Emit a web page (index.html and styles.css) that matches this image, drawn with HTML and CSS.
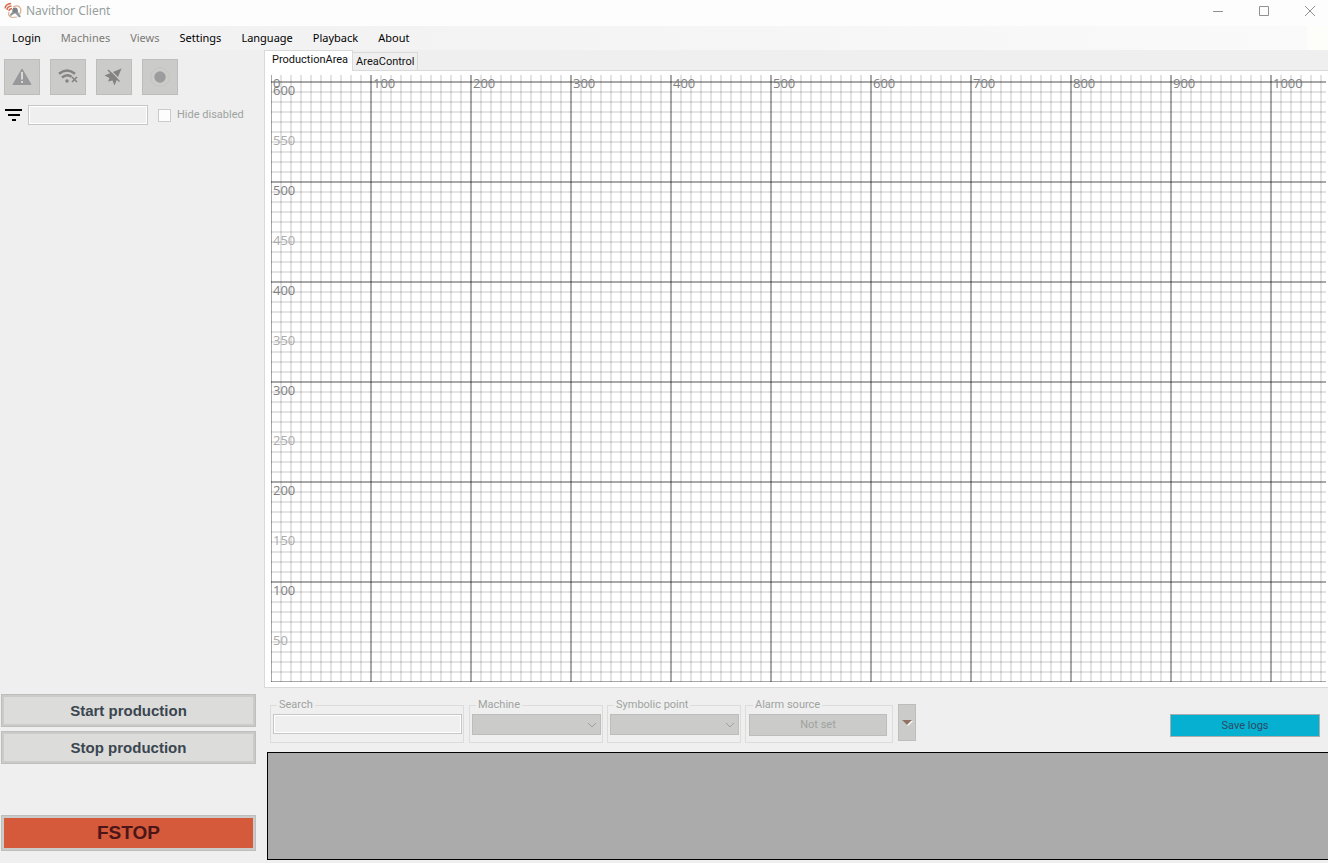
FILE: index.html
```html
<!DOCTYPE html>
<html lang="en">
<head>
<meta charset="utf-8">
<title>Navithor Client</title>
<link rel="stylesheet" href="styles.css">
</head>
<body>
<header class="titlebar">
  <svg class="app-icon" width="18" height="18" viewBox="0 0 18 18" fill="none" aria-hidden="true">
    <path d="M9 5Q14.500 2 16.500 6.500Q17.500 10 15.500 12M5 10Q3.500 14 8 15.500L13 15" stroke="#dcb08e" stroke-width="1.200"/>
    <path d="M9 6L13 6.500L14.500 11L17 14.500L15 15.500L11.500 11.500L9.500 12L7 14L5.500 13L8.500 9.500Z" fill="#92979b"/>
    <circle cx="11" cy="8" r="2.600" fill="#7c8287"/>
    <path d="M5 9Q5 7 8 6.500M3 8Q3 4.500 7.500 4M1 6.500Q1.500 2 7 1.500" stroke="#d8694c" stroke-width="1.400"/>
  </svg>
  <h1 class="app-title">Navithor Client</h1>
  <div class="window-controls">
    <button class="window-button" aria-label="Minimize"><svg width="12" height="12" viewBox="0 0 12 12"><path d="M1 6.500H11"/></svg></button>
    <button class="window-button" aria-label="Maximize"><svg width="12" height="12" viewBox="0 0 12 12"><path d="M1.500 1.500H10.500V10.500H1.500Z"/></svg></button>
    <button class="window-button" aria-label="Close"><svg width="12" height="12" viewBox="0 0 12 12"><path d="M1 1L11 11M11 1L1 11"/></svg></button>
  </div>
</header>
<nav class="menubar" aria-label="Main menu">
  <button class="menu-item">Login</button>
  <button class="menu-item" disabled>Machines</button>
  <button class="menu-item" disabled>Views</button>
  <button class="menu-item">Settings</button>
  <button class="menu-item">Language</button>
  <button class="menu-item">Playback</button>
  <button class="menu-item">About</button>
</nav>
<div class="workspace">
  <aside class="sidebar">
    <div class="tool-row">
      <button class="tool" disabled aria-label="Warnings"><svg width="20" height="20" viewBox="0 0 20 20"><path d="M10 2L19 17.500H1Z" fill="#98989a" stroke="#98989a" stroke-linejoin="round"/><path d="M9 5H11V12.500H9ZM9 14H11V16H9Z" fill="#d8d8d6"/></svg></button>
      <button class="tool" disabled aria-label="Connection"><svg width="20" height="20" viewBox="0 0 20 20" fill="none" stroke="#858282" stroke-width="2.400"><path d="M1 6.800Q9 .2 17 6.800M4 10.500Q9 6.300 13.500 9.800"/><circle cx="9" cy="14" r="1.700" fill="#858282" stroke="none"/><path d="M14 10L19 15M19 10L14 15" stroke-width="1.600"/></svg></button>
      <button class="tool" disabled aria-label="Navigate"><svg width="20" height="20" viewBox="0 0 20 20"><path d="M17.500 1.500L10.500 18.500L8.500 13.500L4 14.500L5.500 11L.5 8.500Z" fill="#858282"/><path d="M5 2L17 14" stroke="#cbcbc9" stroke-width="1.200"/><path d="M4 3L15.500 14.500" stroke="#858282" stroke-width="1.400"/></svg></button>
      <button class="tool" disabled aria-label="Record"><svg width="20" height="20" viewBox="0 0 20 20"><circle cx="10" cy="10" r="9.500" fill="none" stroke="#c4c4c1"/><circle cx="10" cy="10" r="5.700" fill="#9c9c9e"/></svg></button>
    </div>
    <div class="filter-row">
      <svg width="18" height="14" viewBox="0 0 18 14" aria-hidden="true"><path d="M0 2H17M3 7H15M7 12H11" stroke="#000" stroke-width="2"/></svg>
      <input class="text-field filter-field" type="text" aria-label="Filter machines" disabled>
      <input class="check" type="checkbox" id="hide-disabled" disabled>
      <label class="muted" for="hide-disabled">Hide disabled</label>
    </div>
    <div class="production">
      <button class="action">Start production</button>
      <button class="action">Stop production</button>
      <button class="action action-stop">FSTOP</button>
    </div>
  </aside>
  <main class="main">
    <div class="tabs" role="tablist">
      <button class="tab tab-active" role="tab" aria-selected="true">ProductionArea</button>
      <button class="tab" role="tab" aria-selected="false">AreaControl</button>
    </div>
    <section class="map-panel" aria-label="Production area map">
      <svg class="map" width="100%" height="100%">
        <defs>
          <pattern id="minor" y="7" width="10" height="10" patternUnits="userSpaceOnUse">
            <path d="M0 0H10V1H0ZM0 9H10V10H0Z" fill="#000" fill-opacity=".11"/>
            <path d="M0 0H1V10H0ZM9 0H10V10H9Z" fill="#000" fill-opacity=".11"/>
          </pattern>
          <pattern id="major" y="7" width="100" height="100" patternUnits="userSpaceOnUse">
            <path d="M0 0H100V1H0ZM0 99H100V100H0Z" fill="#000" fill-opacity=".26"/>
            <path d="M0 0H1V100H0ZM99 0H100V100H99Z" fill="#000" fill-opacity=".26"/>
          </pattern>
        </defs>
        <rect width="100%" height="100%" fill="url(#minor)"/>
        <rect width="100%" height="100%" fill="url(#major)"/>
        <g class="axis-major">
          <text x="2" y="13">0</text><text x="102" y="13">100</text><text x="202" y="13">200</text><text x="302" y="13">300</text><text x="402" y="13">400</text><text x="502" y="13">500</text><text x="602" y="13">600</text><text x="702" y="13">700</text><text x="802" y="13">800</text><text x="902" y="13">900</text><text x="1002" y="13">1000</text>
          <text x="2" y="20">600</text><text x="2" y="120">500</text><text x="2" y="220">400</text><text x="2" y="320">300</text><text x="2" y="420">200</text><text x="2" y="520">100</text>
        </g>
        <g class="axis-minor">
          <text x="2" y="70">550</text><text x="2" y="170">450</text><text x="2" y="270">350</text><text x="2" y="370">250</text><text x="2" y="470">150</text><text x="2" y="570">50</text>
        </g>
      </svg>
    </section>
    <div class="toolbar">
      <fieldset class="group group-search">
        <legend><label for="search">Search</label></legend>
        <input class="text-field" id="search" type="text" disabled>
      </fieldset>
      <fieldset class="group group-select">
        <legend><label for="machine">Machine</label></legend>
        <div class="select-wrap"><select class="drop" id="machine" disabled></select><svg class="chevron" width="10" height="6" viewBox="0 0 10 6"><path d="M1 1L5 5L9 1"/></svg></div>
      </fieldset>
      <fieldset class="group group-select">
        <legend><label for="point">Symbolic point</label></legend>
        <div class="select-wrap"><select class="drop" id="point" disabled></select><svg class="chevron" width="10" height="6" viewBox="0 0 10 6"><path d="M1 1L5 5L9 1"/></svg></div>
      </fieldset>
      <fieldset class="group group-alarm">
        <legend><label for="alarm">Alarm source</label></legend>
        <button class="alarm-button" id="alarm" disabled>Not set</button>
      </fieldset>
      <button class="more" aria-label="More filters"><svg width="11" height="6" viewBox="0 0 11 6"><path d="M1 1H11L6 6Z" fill="#fff"/><path d="M0 0H10L5 5Z" fill="#927264"/></svg></button>
      <button class="save">Save logs</button>
    </div>
    <section class="log" aria-label="Log"></section>
  </main>
</div>
</body>
</html>
```

FILE: styles.css
```css
* { box-sizing: border-box; }

body {
  margin: 0;
  min-height: 100vh;
  display: flex;
  flex-direction: column;
  background: #efefef;
  font: 12px/16px "Noto Sans", "Open Sans", sans-serif;
  color: #000;
}

button, input, select { font: inherit; border-radius: 0; margin: 0; }

.titlebar {
  display: flex;
  align-items: center;
  height: 26px;
  padding: 0 6px 4px 4px;
  background: #fdfdfd;
}
.app-icon { margin-right: 4px; }
.app-title { margin: 0; font-size: 12px; font-weight: 400; color: #95a09c; }
.window-controls { display: flex; gap: 22px; margin-left: auto; }
.window-button {
  display: flex;
  align-items: center;
  justify-content: center;
  width: 24px;
  height: 20px;
  padding: 0;
  border: 0;
  background: none;
}
.window-button svg { fill: none; stroke: #909090; }

.menubar {
  display: flex;
  height: 24px;
  padding-left: 2px;
  background: linear-gradient(90deg, #f0f0f0, #fafafa) no-repeat 0 0 / calc(100% - 21px) 100% #fdfdfa;
}
.menu-item { border: 0; padding: 0 10px; background: none; color: #000; font-size: 11px; }
.menu-item:disabled { color: #7d7a76; }

.workspace { flex: 1; display: grid; grid-template-columns: 264px minmax(0, 1fr); }

.sidebar { display: flex; flex-direction: column; padding: 9px 8px 12px 1px; }
.tool-row { display: flex; gap: 10px; padding-left: 3px; }
.tool {
  display: flex;
  align-items: center;
  justify-content: center;
  width: 36px;
  height: 36px;
  padding: 0;
  border: 1px solid #bdbdbb;
  background: #cbcbc9;
}
.filter-row { display: flex; align-items: center; padding: 10px 0 0 4px; }
.text-field {
  width: 100%;
  height: 20px;
  border: 1px solid #c6c6c4;
  background: #efefef;
  box-shadow: inset 0 0 0 1px #fff;
}
.filter-field { width: 120px; margin-left: 5px; }
.check {
  appearance: none;
  width: 13px;
  height: 13px;
  margin: 0 6px 0 10px;
  border: 1px solid #cbcbc9;
  background: #fdfdfd;
}
.muted, .group, .alarm-button, .save {
  font-family: Roboto, "Liberation Sans", sans-serif;
  font-size: 11px;
  line-height: 16px;
  color: #9ea3a0;
}

.production { display: flex; flex-direction: column; gap: 4px; margin-top: auto; }
.action {
  height: 33px;
  padding: 0;
  border: 1px solid #bdbfbc;
  background: #dcdcda;
  box-shadow: inset 0 0 0 2px #cbcbc9;
  color: #3a4650;
  font: bold 15px/20px "Liberation Sans", Arial, sans-serif;
}
.action-stop {
  height: 36px;
  margin-top: 47px;
  background: #d45a3b;
  color: #4c1517;
  font-size: 19px;
}

.main { display: flex; flex-direction: column; }
.tabs { display: flex; align-items: flex-end; height: 20px; }
.tab {
  height: 18px;
  padding: 0 3px;
  border: 1px solid #d9d9d9;
  border-bottom: 0;
  border-left: 0;
  background: #efefef;
  color: #111;
  font: 11px/16px Roboto, "Liberation Sans", sans-serif;
}
.tab-active {
  height: 21px;
  margin-bottom: -1px;
  padding: 0 4px 2px 7px;
  border-left: 1px solid #d9d9d9;
  background: #fff;
  position: relative;
}
.map-panel {
  flex: 1;
  display: flex;
  padding: 4px 2px 5px 6px;
  border: 1px solid #d9d9d9;
  border-right: 0;
  background: #fff;
}
.map { flex: 1; font-family: "Open Sans", "Noto Sans", sans-serif; font-size: 13px; }
.axis-major { fill: #808080; }
.axis-minor { fill: #acacac; }

.toolbar { display: flex; height: 64px; padding: 9px 8px 0 6px; }
.group { height: 46px; min-width: 0; margin: 0 4px 0 0; padding: 1px 1px 0 2px; border: 1px solid #dcdcdc; }
.group legend { margin-left: 4px; padding: 0 2px; }
.group-search { width: 194px; margin-right: 5px; }
.group-select { width: 134px; }
.group-alarm { width: 148px; margin-right: 5px; padding: 1px 5px 0 3px; }
.group .text-field { display: block; }
.select-wrap { position: relative; }
.drop {
  display: block;
  appearance: none;
  width: 100%;
  height: 21px;
  border: 1px solid #bdbdbb;
  background: #cbcbc9;
  opacity: 1;
}
.chevron { position: absolute; right: 4px; top: 8px; fill: none; stroke: #a0a0a0; stroke-width: 1px; pointer-events: none; }
.alarm-button {
  display: block;
  width: 100%;
  height: 22px;
  padding: 0;
  border: 1px solid #bdbdbb;
  background: #cbcbc9;
}
.more {
  display: flex;
  align-items: center;
  justify-content: center;
  width: 18px;
  height: 37px;
  margin-top: 7px;
  padding: 0;
  border: 1px solid #bdbdbb;
  background: #cbcbc9;
}
.save {
  width: 150px;
  height: 23px;
  margin: 17px 0 0 auto;
  padding: 0;
  border: 1px solid #a9adad;
  background: #05b0d0;
  color: #2c4a66;
}
.log {
  height: 108px;
  margin: 0 0 3px 3px;
  border: 1px solid #000;
  border-right: 0;
  background: #ababab;
}
```
